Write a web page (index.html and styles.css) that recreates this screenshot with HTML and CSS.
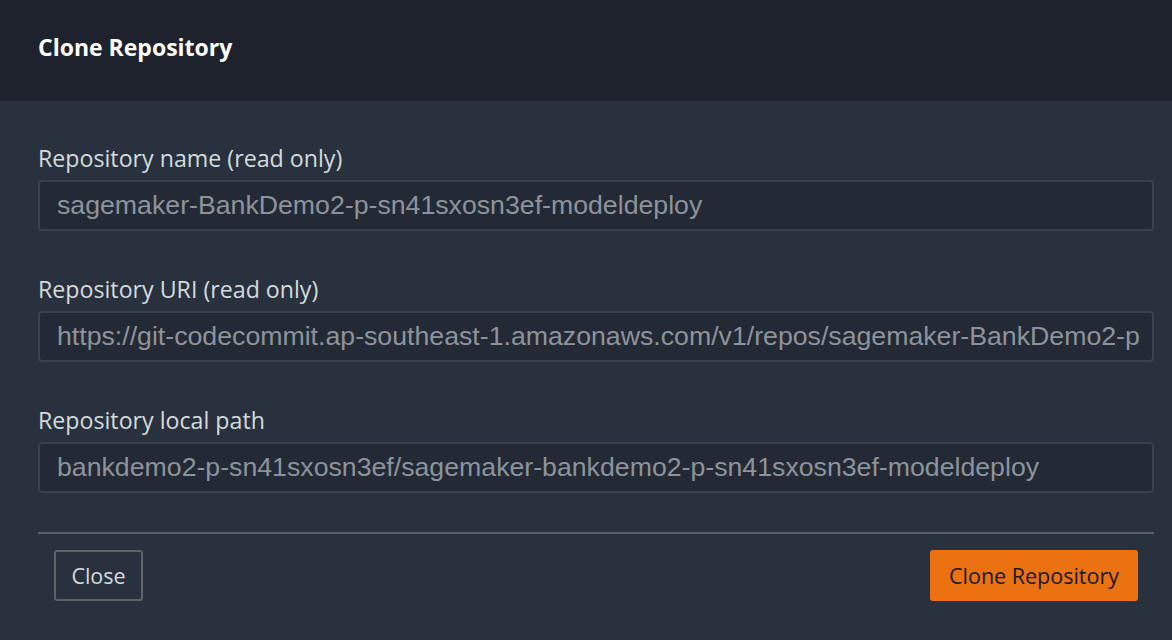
FILE: index.html
```html
<!DOCTYPE html>
<html>
<head>
<meta charset="utf-8">
<link rel="stylesheet" href="styles.css">
</head>
<body>
<div class="dialog">
  <header class="dialog-header">
    <h1 class="title">Clone Repository</h1>
  </header>
  <main class="dialog-body">
    <div class="field">
      <label class="label">Repository name (read only)</label>
      <div class="input">sagemaker-BankDemo2-p-sn41sxosn3ef-modeldeploy</div>
    </div>
    <div class="field">
      <label class="label">Repository URI (read only)</label>
      <div class="input">https://git-codecommit.ap-southeast-1.amazonaws.com/v1/repos/sagemaker-BankDemo2-p</div>
    </div>
    <div class="field">
      <label class="label">Repository local path</label>
      <div class="input">bankdemo2-p-sn41sxosn3ef/sagemaker-bankdemo2-p-sn41sxosn3ef-modeldeploy</div>
    </div>
    <div class="footer">
      <button class="btn btn-secondary">Close</button>
      <button class="btn btn-primary">Clone Repository</button>
    </div>
  </main>
</div>
</body>
</html>
```
FILE: styles.css
```css
* { box-sizing: border-box; }
html, body { margin: 0; padding: 0; }
body {
  width: 1172px;
  height: 640px;
  background: #29313f;
  font-family: "Open Sans", "Noto Sans", sans-serif;
  overflow: hidden;
}
.dialog-header {
  height: 101px;
  background: #1e222d;
  padding: 32px 38px 0;
}
.title {
  margin: 0;
  font-size: 23px;
  font-weight: 700;
  color: #ffffff;
  line-height: 30px;
}
.dialog-body {
  padding: 43px 18px 0 38px;
}
.field {
  display: flex;
  flex-direction: column;
  margin-bottom: 44px;
}
.label {
  font-size: 23.2px;
  color: #d5dbdb;
  line-height: 28px;
  margin-bottom: 8px;
}
.input {
  height: 51px;
  background: #232a35;
  border: 2px solid #3b414b;
  border-radius: 4px;
  padding: 0 17px;
  font-family: "Liberation Sans", Arial, sans-serif;
  font-size: 26.7px;
  color: #8d939a;
  line-height: 47px;
  white-space: nowrap;
  overflow: hidden;
}
.footer {
  border-top: 2px solid #5b5f66;
  margin-top: -5px;
  padding: 16px 16px 0;
  display: flex;
  justify-content: space-between;
}
.btn {
  height: 51px;
  border-radius: 3px;
  font-family: "Open Sans", "Noto Sans", sans-serif;
  font-size: 21.5px;
  padding: 0;
  cursor: pointer;
}
.btn-secondary {
  background: transparent;
  border: 2px solid #5f6267;
  color: #d5dbdb;
  width: 89px;
}
.btn-primary {
  background: #ec7211;
  border: none;
  color: #16191f;
  width: 208px;
}
```
